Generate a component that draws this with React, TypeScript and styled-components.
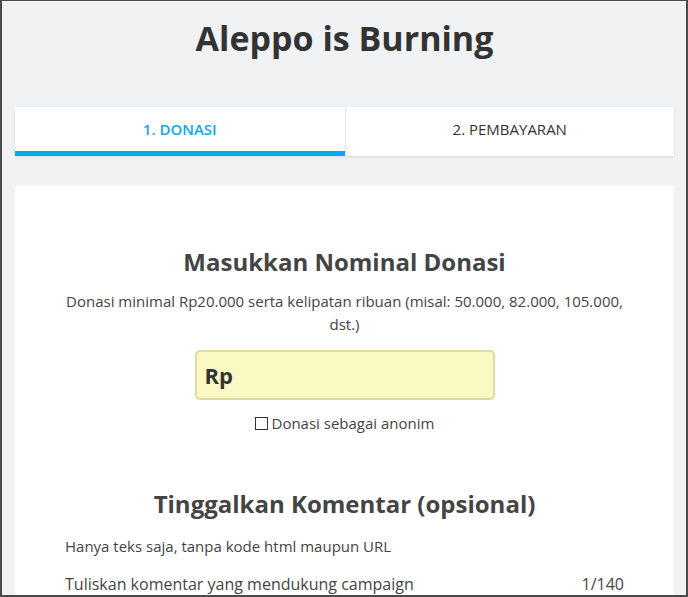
import React, { useState } from 'react'
import styled, { createGlobalStyle } from 'styled-components'

const GlobalStyle = createGlobalStyle`
  html, body {
    margin: 0;
    padding: 0;
    font-family: "Open Sans", "Noto Sans", Arial, sans-serif;
  }
`

const Frame = styled.div`
  box-sizing: border-box;
  width: 688px;
  height: 597px;
  overflow: hidden;
  background: #f1f2f4;
  border: 2px solid #4a4a4a;
  border-top-width: 1px;
`
const Page = styled.div`
  padding: 0 12px 0 13px;
`
const Title = styled.h1`
  margin: 0;
  padding-top: 14px;
  font-size: 34px;
  line-height: 46px;
  font-weight: 700;
  color: #333;
  text-align: center;
`
const Tabs = styled.div`
  margin-top: 46px;
  display: grid;
  grid-template-columns: 1fr 1fr;
  background: #fff;
  box-shadow: 0 1px 3px rgba(0, 0, 0, 0.1);
`
interface TabProps {
  active?: boolean
}
const Tab = styled.div<TabProps>`
  line-height: 44px;
  text-align: center;
  font-size: 15px;
  font-weight: ${p => p.active ? 600 : 400};
  color: ${p => p.active ? '#14a6ea' : '#333'};
  border-bottom: 5px solid ${p => p.active ? '#00a9ec' : 'transparent'};
  & + & {
    border-left: 1px solid #e6e6e6;
  }
`
const Card = styled.div`
  margin-top: 30px;
  background: #fff;
  padding: 60px 40px 40px;
  min-height: 600px;
`
const Heading = styled.h2`
  margin: 0;
  font-size: 24px;
  line-height: 32px;
  font-weight: 700;
  color: #444;
  text-align: center;
`
const Hint = styled.p`
  margin: 12px 0 0;
  font-size: 15px;
  line-height: 23px;
  color: #444;
  text-align: center;
`
const AmountBox = styled.label`
  box-sizing: border-box;
  display: flex;
  align-items: center;
  width: 300px;
  height: 50px;
  margin: 14px auto 0;
  padding: 0 8px;
  background: #fbf9c3;
  border: 2px solid #e3d9a3;
  border-radius: 5px;
`
const AmountPrefix = styled.span`
  font-size: 22px;
  font-weight: 700;
  color: #333;
`
const AmountInput = styled.input`
  flex: 1;
  min-width: 0;
  border: none;
  outline: none;
  background: transparent;
  font: inherit;
  font-size: 22px;
  font-weight: 700;
  color: #333;
`
const CheckRow = styled.label`
  display: flex;
  justify-content: center;
  align-items: center;
  gap: 4px;
  margin-top: 13px;
  font-size: 15px;
  line-height: 20px;
  color: #444;
  cursor: pointer;
`
const CheckBox = styled.span<{ checked: boolean }>`
  box-sizing: border-box;
  width: 13px;
  height: 13px;
  border: 1px solid #333;
  background: ${p => p.checked ? '#333' : '#fff'};
`
const Comment = styled.div`
  margin-top: 55px;
`
const Note = styled.p`
  margin: 16px 0 0;
  padding: 0 10px;
  font-size: 15px;
  line-height: 20px;
  color: #444;
`
const CommentHead = styled.div`
  display: flex;
  justify-content: space-between;
  margin-top: 18px;
  padding: 0 10px;
  font-size: 16px;
  line-height: 20px;
  color: #444;
`

export default function App() {
  const [anon, setAnon] = useState<boolean>(false)
  const [amount, setAmount] = useState<string>('')

  return <Frame>
    <GlobalStyle />
    <Page>
      <Title>Aleppo is Burning</Title>
      <Tabs>
        <Tab active>1. DONASI</Tab>
        <Tab>2. PEMBAYARAN</Tab>
      </Tabs>
      <Card>
        <Heading>Masukkan Nominal Donasi</Heading>
        <Hint>Donasi minimal Rp20.000 serta kelipatan ribuan (misal: 50.000, 82.000, 105.000, dst.)</Hint>
        <AmountBox>
          <AmountPrefix>Rp</AmountPrefix>
          <AmountInput value={amount} onChange={e => setAmount(e.target.value)} />
        </AmountBox>
        <CheckRow onClick={() => setAnon(!anon)}>
          <CheckBox checked={anon} />
          Donasi sebagai anonim
        </CheckRow>
        <Comment>
          <Heading>Tinggalkan Komentar (opsional)</Heading>
          <Note>Hanya teks saja, tanpa kode html maupun URL</Note>
          <CommentHead>
            <span>Tuliskan komentar yang mendukung campaign</span>
            <span>1/140</span>
          </CommentHead>
        </Comment>
      </Card>
    </Page>
  </Frame>
}
